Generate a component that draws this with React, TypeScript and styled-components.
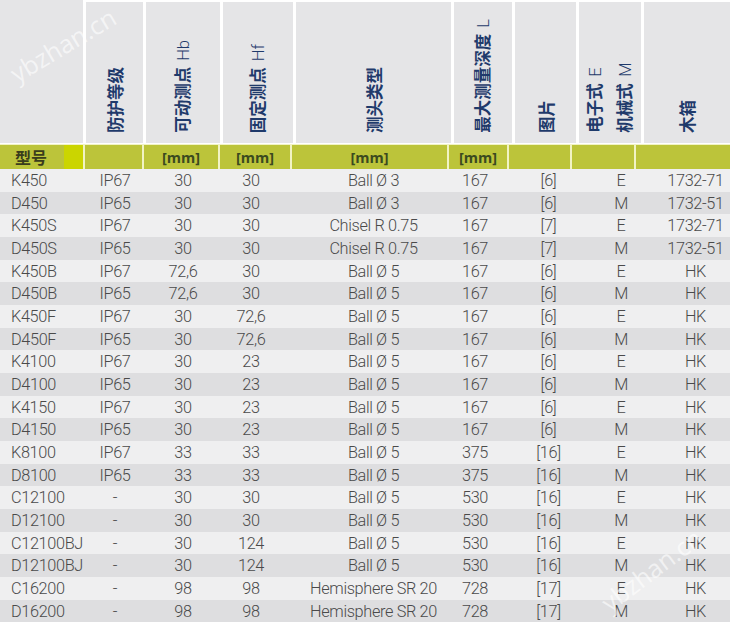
import React from "react";
import styled, { createGlobalStyle } from "styled-components";

const GlobalStyle = createGlobalStyle`
  html, body { margin: 0; padding: 0; background: #ffffff; }
  body { font-family: "Roboto", "Noto Sans CJK SC", sans-serif; }
`;

const Sheet = styled.div`
  position: relative;
  width: 730px;
`;

const HeaderRow = styled.div`
  display: grid;
  grid-template-columns: 83px 57px 74px 70px 155px 58px 61px 62px 1fr;
  column-gap: 3px;
  height: 143px;
  background: #ffffff;
`;

const HeaderCell = styled.div<{ $first?: boolean }>`
  background: #e5e5e7;
  margin-top: ${(p) => (p.$first ? "0" : "2px")};
  display: flex;
  align-items: flex-end;
  justify-content: center;
  padding-bottom: 10px;
`;

const VLabel = styled.div`
  writing-mode: vertical-rl;
  text-orientation: sideways;
  transform: rotate(180deg);
  font-family: "Noto Sans CJK SC", sans-serif;
  font-weight: 700;
  font-size: 16.5px;
  line-height: 28px;
  color: #1f3a6b;
  white-space: nowrap;
`;

const Latin = styled.span`
  font-family: "Roboto", sans-serif;
  font-weight: 300;
  margin-inline-start: 6px;
`;

const UnitRow = styled.div`
  display: grid;
  grid-template-columns: 83px 57px 74px 70px 155px 58px 61px 62px 1fr;
  column-gap: 2px;
  height: 24px;
  margin-top: 1px;
  background: #f1f3c4;
  border-top: 1px solid #f1f3c4;
`;

const UnitCell = styled.div`
  background: #bcc43a;
  display: flex;
  align-items: center;
  justify-content: center;
  font-family: "Open Sans", sans-serif;
  font-weight: 700;
  font-size: 14.5px;
  color: #3b4a1f;
`;

const ModelCell = styled(UnitCell)`
  justify-content: space-between;
  font-family: "Noto Sans CJK SC", sans-serif;
  font-size: 16px;
  color: #3a3d1c;
  padding-left: 15px;
`;

const Swatch = styled.span`
  width: 19px;
  align-self: stretch;
  background: #cbd500;
`;

const Body = styled.div`
  display: flex;
  flex-direction: column;
`;

const Row = styled.div<{ $alt: boolean }>`
  display: grid;
  grid-template-columns: 86px 60px 77px 73px 158px 61px 63px 64px 1fr;
  height: 22.68px;
  align-items: center;
  background: ${(p) => (p.$alt ? "#dedee0" : "#efeff0")};
  font-family: "Roboto", sans-serif;
  font-weight: 300;
  font-size: 16.3px;
  letter-spacing: -0.35px;
  color: #4a4a4a;
`;

const Cell = styled.div<{ $shift: number }>`
  text-align: center;
  white-space: nowrap;
  padding-left: ${(p) => (p.$shift > 0 ? p.$shift * 2 : 0)}px;
  padding-right: ${(p) => (p.$shift < 0 ? -p.$shift * 2 : 0)}px;
`;

const NameCell = styled.div`
  padding-left: 11px;
  white-space: nowrap;
`;

const Mark = styled.span<{ $x: number; $y: number; $angle: number }>`
  position: absolute;
  left: ${(p) => p.$x}px;
  top: ${(p) => p.$y}px;
  transform: rotate(${(p) => p.$angle}deg);
  transform-origin: left center;
  font-family: "Open Sans", sans-serif;
  font-size: 25px;
  line-height: 26px;
  color: rgba(255, 255, 255, 0.6);
  pointer-events: none;
  white-space: nowrap;
`;

const shifts = [-1, -1.5, -8.5, -1.5, -9.5, 2, 11, 9.5];

const rows: string[][] = [
  ["K450", "IP67", "30", "30", "Ball Ø 3", "167", "[6]", "E", "1732-71"],
  ["D450", "IP65", "30", "30", "Ball Ø 3", "167", "[6]", "M", "1732-51"],
  ["K450S", "IP67", "30", "30", "Chisel R 0.75", "167", "[7]", "E", "1732-71"],
  ["D450S", "IP65", "30", "30", "Chisel R 0.75", "167", "[7]", "M", "1732-51"],
  ["K450B", "IP67", "72,6", "30", "Ball Ø 5", "167", "[6]", "E", "HK"],
  ["D450B", "IP65", "72,6", "30", "Ball Ø 5", "167", "[6]", "M", "HK"],
  ["K450F", "IP67", "30", "72,6", "Ball Ø 5", "167", "[6]", "E", "HK"],
  ["D450F", "IP65", "30", "72,6", "Ball Ø 5", "167", "[6]", "M", "HK"],
  ["K4100", "IP67", "30", "23", "Ball Ø 5", "167", "[6]", "E", "HK"],
  ["D4100", "IP65", "30", "23", "Ball Ø 5", "167", "[6]", "M", "HK"],
  ["K4150", "IP67", "30", "23", "Ball Ø 5", "167", "[6]", "E", "HK"],
  ["D4150", "IP65", "30", "23", "Ball Ø 5", "167", "[6]", "M", "HK"],
  ["K8100", "IP67", "33", "33", "Ball Ø 5", "375", "[16]", "E", "HK"],
  ["D8100", "IP65", "33", "33", "Ball Ø 5", "375", "[16]", "M", "HK"],
  ["C12100", "-", "30", "30", "Ball Ø 5", "530", "[16]", "E", "HK"],
  ["D12100", "-", "30", "30", "Ball Ø 5", "530", "[16]", "M", "HK"],
  ["C12100BJ", "-", "30", "124", "Ball Ø 5", "530", "[16]", "E", "HK"],
  ["D12100BJ", "-", "30", "124", "Ball Ø 5", "530", "[16]", "M", "HK"],
  ["C16200", "-", "98", "98", "Hemisphere SR 20", "728", "[17]", "E", "HK"],
  ["D16200", "-", "98", "98", "Hemisphere SR 20", "728", "[17]", "M", "HK"],
];

export default function App() {
  return (
    <Sheet>
      <GlobalStyle />
      <HeaderRow>
        <HeaderCell $first />
        <HeaderCell>
          <VLabel>防护等级</VLabel>
        </HeaderCell>
        <HeaderCell>
          <VLabel>
            可动测点<Latin>Hb</Latin>
          </VLabel>
        </HeaderCell>
        <HeaderCell>
          <VLabel>
            固定测点<Latin>Hf</Latin>
          </VLabel>
        </HeaderCell>
        <HeaderCell>
          <VLabel>测头类型</VLabel>
        </HeaderCell>
        <HeaderCell>
          <VLabel>
            最大测量深度<Latin>L</Latin>
          </VLabel>
        </HeaderCell>
        <HeaderCell>
          <VLabel>图片</VLabel>
        </HeaderCell>
        <HeaderCell>
          <VLabel>
            电子式<Latin>E</Latin>
            <br />
            机械式<Latin>M</Latin>
          </VLabel>
        </HeaderCell>
        <HeaderCell>
          <VLabel>木箱</VLabel>
        </HeaderCell>
      </HeaderRow>
      <UnitRow>
        <ModelCell>
          型号
          <Swatch />
        </ModelCell>
        <UnitCell />
        <UnitCell>[mm]</UnitCell>
        <UnitCell>[mm]</UnitCell>
        <UnitCell>[mm]</UnitCell>
        <UnitCell>[mm]</UnitCell>
        <UnitCell />
        <UnitCell />
        <UnitCell />
      </UnitRow>
      <Body>
        {rows.map((r, i) => (
          <Row key={r[0]} $alt={i % 2 === 1}>
            <NameCell>{r[0]}</NameCell>
            {r.slice(1).map((v, j) => (
              <Cell key={j} $shift={shifts[j]}>
                {v}
              </Cell>
            ))}
          </Row>
        ))}
      </Body>
      <Mark $x={12} $y={62} $angle={-31}>ybzhan.cn</Mark>
      <Mark $x={604} $y={592} $angle={-37}>ybzhan.cn</Mark>
    </Sheet>
  );
}
